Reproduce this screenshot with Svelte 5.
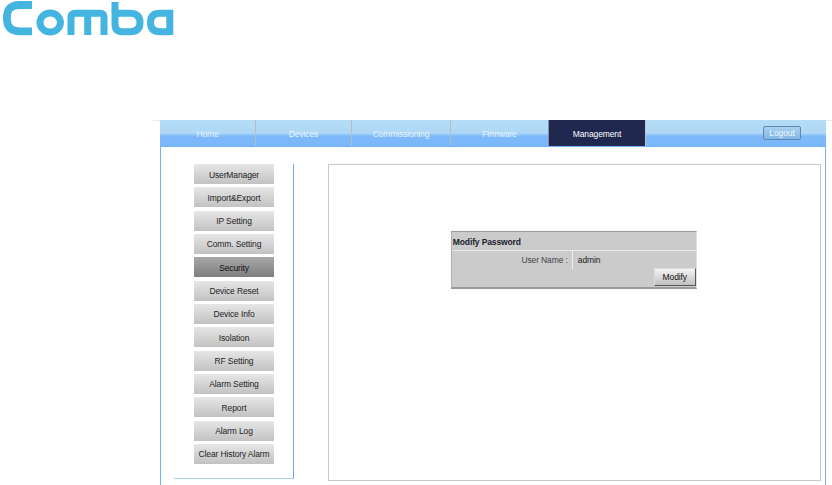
<script>
  const tabs = [
    { label: 'Home', w: 96 },
    { label: 'Devices', w: 96 },
    { label: 'Commissioning', w: 99 },
    { label: 'Firmware', w: 98 },
    { label: 'Management', w: 98, active: true }
  ];
  const items = ['UserManager','Import&Export','IP Setting','Comm. Setting','Security','Device Reset','Device Info','Isolation','RF Setting','Alarm Setting','Report','Alarm Log','Clear History Alarm'];
</script>

<div class="page">
  <header class="brand">
    <svg width="180" height="40" viewBox="0 0 180 40" role="img" aria-label="Comba logo">
      <g fill="none" stroke="#44b4e0" stroke-width="7">
        <path stroke-width="7.8" d="M32 5H20C10 5 6.900 10 6.900 18S10 31.300 20 31.300H32"/>
        <ellipse cx="50.200" cy="22.500" rx="10.200" ry="9.500"/>
        <path d="M71 35V17.500Q71 13.300 75.500 13.300H100Q104 13.300 104 17.500V35M87.700 13.300V35"/>
        <path d="M115 2V24Q115 31.700 122 31.700H130Q140 31.700 140 22.500Q140 13.300 130 13.300H115"/>
        <path d="M169.800 35V13.300H160Q150.500 13.300 150.500 22.500Q150.500 31.700 160 31.700H169.800"/>
      </g>
    </svg>
  </header>

  <div class="app">
    <nav class="tabs">
      {#each tabs as t}
        <div class="tab" class:active={t.active} style="width:{t.w}px">{t.label}</div>
      {/each}
      <button class="logout">Logout</button>
    </nav>
    <div class="body">
      <aside class="side">
        {#each items as it}
          <div class="item" class:current={it === 'Security'}>{it}</div>
        {/each}
      </aside>
      <main class="panel">
        <section class="dialog">
          <div class="title">Modify Password</div>
          <div class="row"><span class="lab">User Name :</span><span class="val">admin</span></div>
          <div class="act"><button class="modify">Modify</button></div>
        </section>
      </main>
    </div>
  </div>
</div>

<style>
  :global(body) { margin: 0; background: #fff; }
  .page { width: 832px; height: 485px; overflow: hidden; font-family: "Liberation Sans", Arial, sans-serif; font-size: 8.5px; letter-spacing: -0.12px; color: #222; }
  .brand { height: 120px; box-sizing: border-box; }
  .brand svg { display: block; }
  .app { margin-left: 160px; width: 666px; }
  .tabs { position: relative; display: flex; height: 26px; align-items: stretch; background: linear-gradient(#b5dcf6 0%, #aed8f6 50%, #7db9f8 62%, #7ab6fb 100%); }
  .tabs::before, .tabs::after { content: ""; position: absolute; top: 0; height: 1px; background: #e8e8e8; }
  .tabs::before { left: -7px; width: 7px; }
  .tabs::after { right: -6px; width: 6px; }
  .tab { box-sizing: border-box; display: flex; align-items: center; justify-content: center; color: #e8f3fc; border-right: 1px solid #b4bcc8; padding-top: 1px; }
  .tab.active { background: #20284f; color: #fff; border-left: 1px solid #8a90a8; margin-left: -1px; border-right-color: #c0c6d0; }
  .logout { margin: 6px 25px 6px auto; width: 38px; height: 14px; padding: 0; border: 1px solid #5f88ae; border-radius: 2px; box-sizing: border-box; background: linear-gradient(#a8d2ee, #82b6e6); color: #eef6fc; font: inherit; letter-spacing: inherit; }
  .body { box-sizing: border-box; height: 339px; border-left: 1px solid #74b4ee; border-right: 1px solid #74b4ee; border-top: 1px solid #74b4ee; display: flex; padding: 17px 4px 0 13px; }
  .side { box-sizing: border-box; width: 120px; height: 315px; padding-left: 20px; border-right: 1px solid #74a9e0; border-bottom: 1px solid #a8d4f2; display: flex; flex-direction: column; gap: 3.33px; }
  .item { box-sizing: border-box; width: 80px; height: 20px; padding-top: 1px; flex: none; display: flex; align-items: center; justify-content: center; background: linear-gradient(#e6e6e6, #c2c2c2); color: #1e1e1e; white-space: nowrap; }
  .item.current { background: linear-gradient(#a8a8a8, #7e7e7e); color: #111; }
  .panel { box-sizing: border-box; margin-left: 34px; width: 494px; height: 317px; border: 1px solid #c8c8c8; padding: 66px 0 0 122px; }
  .dialog { box-sizing: border-box; width: 246px; height: 58px; background: #cbcbcb; border: 1px solid #9a9a9a; border-bottom-width: 2px; border-left-color: #b0b0b0; border-right-color: #e0e0e0; }
  .title { height: 19px; line-height: 20px; padding-left: 1px; font-weight: bold; color: #1c1c2c; border-bottom: 1px solid #eaeaea; box-sizing: border-box; }
  .row { display: flex; height: 18px; align-items: center; }
  .lab { width: 121px; height: 100%; line-height: 18px; text-align: right; color: #444; box-sizing: border-box; border-right: 1px solid #eee; padding-right: 4px; }
  .val { padding-left: 5px; color: #222; }
  .act { display: flex; justify-content: flex-end; }
  .modify { width: 42px; height: 18px; margin-top: -1px; padding: 0; border: 1px solid #555; border-top-color: #ddd; border-left-color: #ddd; background: linear-gradient(#f4f4f4, #c0c0c0); font: inherit; letter-spacing: inherit; color: #111; box-sizing: border-box; }
</style>
